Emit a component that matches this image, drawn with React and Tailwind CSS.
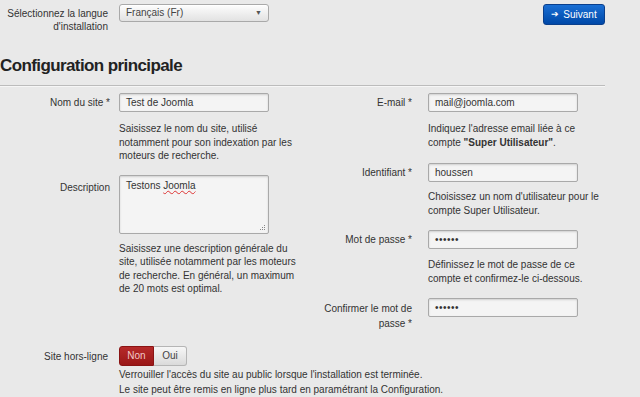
export default function App() {
  return (
    <div className="w-[640px] h-[397px] overflow-hidden bg-[#e9e9e9] text-[#333] text-[10px] leading-[13.5px] font-['Liberation_Sans',Arial,sans-serif]">
      {/* langue + suivant */}
      <div className="flex items-start pt-[4px] pr-[35px]">
        <div className="w-[108px] text-right leading-[13px] pt-[3px]">
          Sélectionnez la langue d'installation
        </div>
        <div className="ml-[11px] w-[150px] h-[18px] flex items-center justify-between px-[6px] rounded-[3px] border border-[#a9a9a9] bg-gradient-to-b from-[#fdfdfd] to-[#e2e2e2] shadow-[inset_0_1px_0_#fff]">
          <span className="text-[#444]">Français (Fr)</span>
          <span className="text-[7px] text-[#555]">▼</span>
        </div>
        <button className="ml-auto w-[62px] h-[21px] flex items-center justify-center gap-[4px] rounded-[3px] border border-[#0a3f8c] bg-gradient-to-b from-[#1a6fd4] to-[#0048a8] text-white text-[10px]">
          <span className="text-[9px]">➔</span>
          <span>Suivant</span>
        </button>
      </div>

      {/* titre */}
      <h1 className="mt-[23px] text-[17px] leading-[20px] font-bold tracking-[-0.6px] text-[#222]">
        Configuration principale
      </h1>
      <div className="mt-[9px] w-[605px] h-[2px] border-t border-[#bcbcbc] border-b border-b-[#f6f6f6]" />

      {/* deux colonnes */}
      <div className="flex mt-[6px]">
        {/* gauche */}
        <div className="w-[320px]">
          <div className="flex">
            <div className="w-[110px] text-right leading-[13px] pt-[3px]">Nom du site *</div>
            <div className="ml-[9px]">
              <div className="w-[150px] h-[19px] border border-[#a9a9a9] rounded-[2px] bg-[#f4f4f4] shadow-[inset_0_1px_2px_rgba(0,0,0,0.15)] px-[6px] leading-[17px] text-[#333]">
                Test de Joomla
              </div>
              <p className="mt-[10px] w-[180px]">
                Saisissez le nom du site, utilisé notamment pour son indexation par les moteurs de recherche.
              </p>
            </div>
          </div>
          <div className="flex mt-[12px]">
            <div className="w-[110px] text-right leading-[13px] pt-[6px]">Description</div>
            <div className="ml-[9px]">
              <div className="relative w-[150px] h-[59px] border border-[#a9a9a9] rounded-[2px] bg-[#f4f4f4] shadow-[inset_0_1px_2px_rgba(0,0,0,0.15)] px-[6px] pt-[3px] text-[#333]">
                Testons{' '}
                <span className="underline decoration-wavy decoration-[#d33] decoration-[1px]">Joomla</span>
                <svg className="absolute right-[2px] bottom-[2px]" width="7" height="7" viewBox="0 0 7 7">
                  <rect x="5" y="1" width="1" height="1" fill="#888" />
                  <rect x="3" y="3" width="1" height="1" fill="#888" />
                  <rect x="5" y="3" width="1" height="1" fill="#888" />
                  <rect x="1" y="5" width="1" height="1" fill="#888" />
                  <rect x="3" y="5" width="1" height="1" fill="#888" />
                  <rect x="5" y="5" width="1" height="1" fill="#888" />
                </svg>
              </div>
              <p className="mt-[8px] w-[180px]">
                Saisissez une description générale du site, utilisée notamment par les moteurs de recherche. En général, un maximum de 20 mots est optimal.
              </p>
            </div>
          </div>
        </div>

        {/* droite */}
        <div className="w-[320px]">
          <div className="flex">
            <div className="w-[92px] text-right leading-[13px] pt-[3px]">E-mail *</div>
            <div className="ml-[16px]">
              <div className="w-[150px] h-[19px] border border-[#a9a9a9] rounded-[2px] bg-[#f4f4f4] shadow-[inset_0_1px_2px_rgba(0,0,0,0.15)] px-[6px] leading-[17px]">
                mail@joomla.com
              </div>
              <p className="mt-[10px] w-[180px]">
                Indiquez l'adresse email liée à ce compte <b>"Super Utilisateur"</b>.
              </p>
            </div>
          </div>
          <div className="flex mt-[14px]">
            <div className="w-[92px] text-right leading-[13px] pt-[3px]">Identifiant *</div>
            <div className="ml-[16px]">
              <div className="w-[150px] h-[19px] border border-[#a9a9a9] rounded-[2px] bg-[#f4f4f4] shadow-[inset_0_1px_2px_rgba(0,0,0,0.15)] px-[6px] leading-[17px]">
                houssen
              </div>
              <p className="mt-[8px] w-[180px]">
                Choisissez un nom d'utilisateur pour le compte Super Utilisateur.
              </p>
            </div>
          </div>
          <div className="flex mt-[13px]">
            <div className="w-[92px] text-right leading-[13px] pt-[3px]">Mot de passe *</div>
            <div className="ml-[16px]">
              <div className="w-[150px] h-[19px] border border-[#a9a9a9] rounded-[2px] bg-[#f4f4f4] shadow-[inset_0_1px_2px_rgba(0,0,0,0.15)] px-[6px] leading-[17px] tracking-[0.5px] text-[#333]">
                ••••••
              </div>
              <p className="mt-[9px] w-[180px]">
                Définissez le mot de passe de ce compte et confirmez-le ci-dessous.
              </p>
            </div>
          </div>
          <div className="flex mt-[13px]">
            <div className="w-[92px] text-right leading-[15px] pt-[3px]">Confirmer le mot de passe *</div>
            <div className="ml-[16px]">
              <div className="w-[150px] h-[19px] border border-[#a9a9a9] rounded-[2px] bg-[#f4f4f4] shadow-[inset_0_1px_2px_rgba(0,0,0,0.15)] px-[6px] leading-[17px] tracking-[0.5px] text-[#333]">
                ••••••
              </div>
            </div>
          </div>
        </div>
      </div>

      {/* site hors-ligne */}
      <div className="flex mt-[15px]">
        <div className="w-[108px] text-right leading-[13px] pt-[4px]">Site hors-ligne</div>
        <div className="ml-[11px]">
          <div className="flex h-[20px]">
            <div className="w-[35px] flex items-center justify-center rounded-l-[3px] border border-[#8a1414] bg-gradient-to-b from-[#b62a2a] to-[#9a1717] text-[#f3c9c9]">
              Non
            </div>
            <div className="w-[33px] flex items-center justify-center rounded-r-[3px] border border-l-0 border-[#b5b5b5] bg-gradient-to-b from-[#f7f7f7] to-[#dadada] text-[#444]">
              Oui
            </div>
          </div>
          <p className="mt-[1px] leading-[15px]">
            Verrouiller l'accès du site au public lorsque l'installation est terminée.
            <br />
            Le site peut être remis en ligne plus tard en paramétrant la Configuration.
          </p>
        </div>
      </div>
    </div>
  )
}
